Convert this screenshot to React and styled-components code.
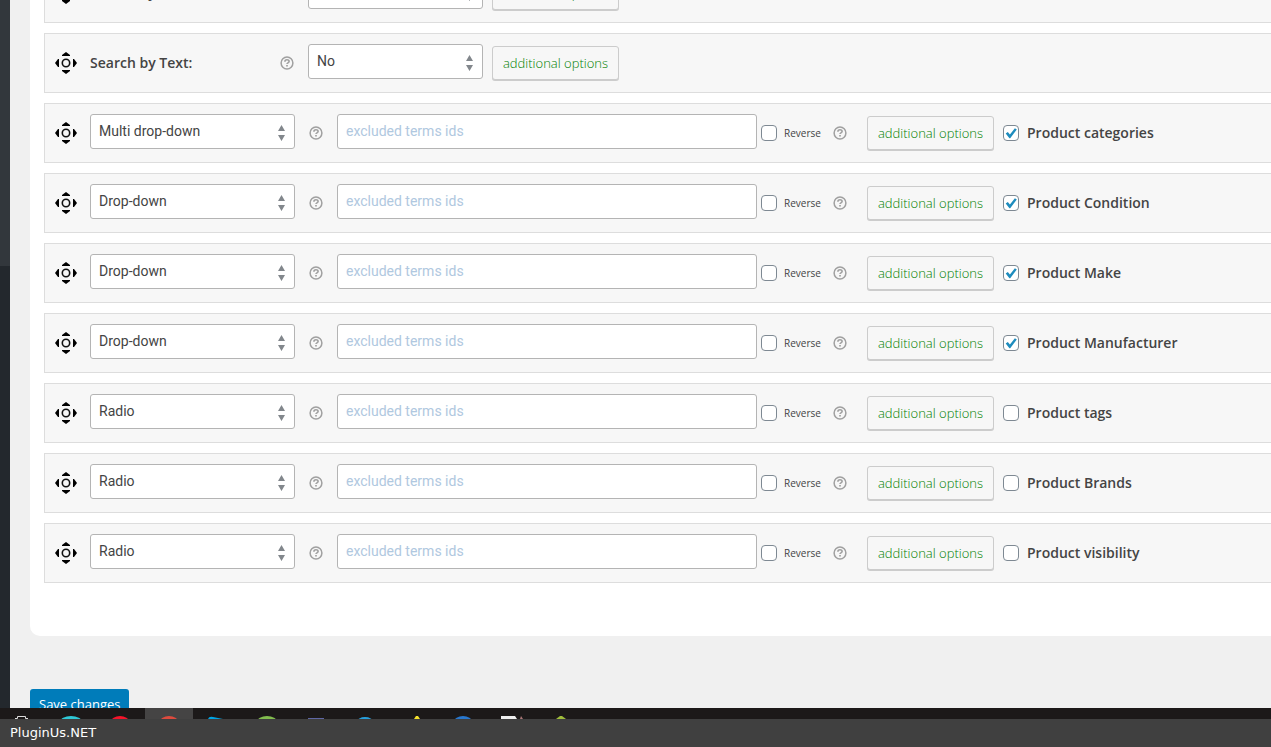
import React, { useState } from "react";
import styled, { createGlobalStyle, ThemeProvider } from "styled-components";

const theme = {
  colors: {
    page: "#f0f0f0",
    panel: "#ffffff",
    row: "#f7f7f7",
    rowBorder: "#dddddd",
    fieldBorder: "#b4b4b4",
    text: "#444444",
    placeholder: "#b0c8e0",
    option: "#008000",
    primary: "#007cba",
    check: "#1e8cbe"
  }
};

const GlobalStyle = createGlobalStyle`
  *,
  *::before,
  *::after {
    box-sizing: border-box;
  }

  body {
    margin: 0;
    color: #444444;
    font-family: "Open Sans", sans-serif;
    font-size: 14px;
  }
`;

const Screen = styled.div`
  height: 100vh;
  display: flex;
  flex-direction: column;
  overflow: hidden;
`;

const Admin = styled.div`
  flex: 1;
  min-height: 0;
  display: flex;
  overflow: hidden;
  background: ${props => props.theme.colors.page};
`;

const AdminMenu = styled.nav`
  flex: none;
  width: 10px;
  background: linear-gradient(#32373c 266px, #23282d 266px);
`;

const Content = styled.main`
  flex: 1;
  min-width: 0;
  padding-left: 20px;
  overflow: hidden;
`;

const Panel = styled.section`
  padding: 0 0 53px 14px;
  margin-bottom: 53px;
  background: ${props => props.theme.colors.panel};
  border-bottom-left-radius: 10px;
`;

/* the list is scrolled part of the way through its first row */
const FieldList = styled.ul`
  list-style: none;
  margin: -37px 0 0;
  padding: 0;
  display: flex;
  flex-direction: column;
  gap: 10px;
`;

const Row = styled.li`
  height: 60px;
  padding: 10px;
  display: flex;
  align-items: flex-start;
  background: ${props => props.theme.colors.row};
  border: 1px solid ${props => props.theme.colors.rowBorder};
  border-right: 0;

  > * {
    flex: none;
  }
`;

const Handle = styled.button`
  width: 24px;
  height: 38px;
  margin-right: 11px;
  padding: 0;
  display: flex;
  align-items: center;
  justify-content: flex-start;
  border: 0;
  background: none;
  cursor: move;
`;

const RowLabel = styled.label`
  width: 190px;
  line-height: 38px;
  font-weight: 600;
`;

const HelpButton = styled.button`
  width: 14px;
  height: 38px;
  margin-left: ${props => (props.$flush ? 0 : 14)}px;
  margin-right: ${props => (props.$wide ? 20 : 14)}px;
  padding: 0;
  display: flex;
  align-items: center;
  border: 0;
  background: none;
  cursor: help;
`;

const SelectWrap = styled.div`
  position: relative;
  width: ${props => (props.$small ? 175 : 205)}px;
  margin-right: ${props => (props.$small ? 9 : 0)}px;

  select {
    appearance: none;
    width: 100%;
    height: 35px;
    padding: 0 28px 2px 8px;
    border: 1px solid ${props => props.theme.colors.fieldBorder};
    border-radius: 3px;
    background: white;
    color: ${props => props.theme.colors.text};
    font-family: Roboto, sans-serif;
    font-size: 14px;
  }

  svg {
    position: absolute;
    right: 9px;
    top: 11px;
    pointer-events: none;
  }
`;

const TermsInput = styled.input`
  width: 420px;
  height: 35px;
  margin-right: 4px;
  padding: 0 8px 2px;
  border: 1px solid ${props => props.theme.colors.fieldBorder};
  border-radius: 3px;
  background: white;
  font-family: Roboto, sans-serif;
  font-size: 14px;

  &::placeholder {
    color: ${props => props.theme.colors.placeholder};
    opacity: 1;
  }
`;

const OptionsButton = styled.button`
  width: 127px;
  height: 34px;
  margin: 2px 9px 0 0;
  padding: 0;
  border: 1px solid #cccccc;
  border-radius: 3px;
  background: ${props => props.theme.colors.row};
  box-shadow: 0 1px 0 #cccccc;
  color: ${props => props.theme.colors.option};
  font-family: "Open Sans", sans-serif;
  font-size: 13px;
  font-weight: 300;
  cursor: pointer;
`;

const CheckLabel = styled.label`
  width: ${props => (props.$small ? "58px" : "auto")};
  height: 38px;
  display: flex;
  align-items: center;
  gap: ${props => (props.$small ? 7 : 8)}px;
  font-size: ${props => (props.$small ? 10 : 14)}px;
  font-weight: ${props => (props.$small ? 400 : 600)};
  line-height: 18px;
  white-space: nowrap;
`;

const CheckBox = styled.span`
  position: relative;
  display: flex;

  input {
    appearance: none;
    width: 16px;
    height: 16px;
    margin: 0;
    border: 1px solid #7e8993;
    border-radius: 4px;
    background: white;
  }

  svg {
    position: absolute;
    inset: 0;
    pointer-events: none;
  }
`;

const SaveButton = styled.button`
  height: 32px;
  padding: 0 9px 2px;
  border: 0;
  border-radius: 3px;
  background: ${props => props.theme.colors.primary};
  color: white;
  font-family: "Open Sans", sans-serif;
  font-size: 13px;
`;

const Taskbar = styled.div`
  flex: none;
  height: 11px;
  background: #1c1919;

  svg {
    display: block;
  }
`;

const Caption = styled.footer`
  flex: none;
  height: 28px;
  padding: 0 10px;
  background: #404040;
  color: white;
  font-family: "DejaVu Sans", sans-serif;
  font-size: 13px;
  line-height: 28px;
`;

const MoveIcon = () => (
  <svg width="22" height="22" viewBox="0 0 22 22">
    <path
      d="M11 0l4 3v1H7V3zM11 22l4-3v-1H7v1zM0 11l3-4h1v8H3zM22 11l-3-4h-1v8h1z"
      fill="#000"
    />
    <circle cx="11" cy="11" r="3.7" fill="none" stroke="#111" strokeWidth="1.6" />
  </svg>
);

const HelpIcon = () => (
  <svg width="14" height="14" viewBox="0 0 14 14" fill="none" stroke="#a0a0a0">
    <circle cx="7" cy="7" r="5.9" strokeWidth="1.5" />
    <path d="M4.9 5.7c0-2.5 4.200-2.500 4.200-.2 0 1.400-2.100 1.400-2.100 2.600" strokeWidth="1.6" />
    <path d="M7 9v1.600" strokeWidth="1.7" />
  </svg>
);

const Help = props => (
  <HelpButton type="button" aria-label="Help" {...props}>
    <HelpIcon />
  </HelpButton>
);

const Select = ({ small, options, value, ...rest }) => (
  <SelectWrap $small={small}>
    <select defaultValue={value} {...rest}>
      {options.map(option => (
        <option key={option}>{option}</option>
      ))}
    </select>
    <svg width="8" height="16" viewBox="0 0 8 16" fill="#82878c">
      <path d="M3.500 0L7 6H0zM3.500 16L7 10H0z" />
    </svg>
  </SelectWrap>
);

const Check = ({ small, label, initial }) => {
  const [checked, setChecked] = useState(Boolean(initial));
  return (
    <CheckLabel $small={small}>
      <CheckBox>
        <input
          type="checkbox"
          checked={checked}
          onChange={() => setChecked(!checked)}
        />
        {checked && (
          <svg width="16" height="16" viewBox="0 0 16 16">
            <path
              d="M2.700 8.400l2.100-1.500 2.100 2.500 5-6.100 1.900 1.100L7.200 13.200H6.400z"
              fill={theme.colors.check}
            />
          </svg>
        )}
      </CheckBox>
      {label}
    </CheckLabel>
  );
};

const DragHandle = () => (
  <Handle type="button" aria-label="Move">
    <MoveIcon />
  </Handle>
);

const TextRow = ({ id, label }) => (
  <Row>
    <DragHandle />
    <RowLabel htmlFor={id}>{label}</RowLabel>
    <Help $flush />
    <Select small id={id} options={["No", "Yes"]} value="No" />
    <OptionsButton type="button">additional options</OptionsButton>
  </Row>
);

const VIEWS = ["Radio", "Drop-down", "Multi drop-down", "Checkbox"];

const TaxonomyRow = ({ view, name, active }) => (
  <Row>
    <DragHandle />
    <Select options={VIEWS} value={view} aria-label={`${name} view`} />
    <Help />
    <TermsInput
      type="text"
      placeholder="excluded terms ids"
      aria-label={`${name} excluded terms ids`}
    />
    <Check small label="Reverse" />
    <Help $wide />
    <OptionsButton type="button">additional options</OptionsButton>
    <Check label={name} initial={active} />
  </Row>
);

const taxonomies = [
  { view: "Multi drop-down", name: "Product categories", active: true },
  { view: "Drop-down", name: "Product Condition", active: true },
  { view: "Drop-down", name: "Product Make", active: true },
  { view: "Drop-down", name: "Product Manufacturer", active: true },
  { view: "Radio", name: "Product tags" },
  { view: "Radio", name: "Product Brands" },
  { view: "Radio", name: "Product visibility" }
];

const TaskbarIcons = () => (
  <svg width="600" height="11" viewBox="0 0 600 11">
    <rect x="145" width="48" height="11" fill="#454444" />
    <path d="M15 10.500h2.500v-2h8v2H28" fill="none" stroke="#ddd" />
    <ellipse cx="71" cy="14" rx="11" ry="6" fill="#2fc8d6" />
    <ellipse cx="120" cy="14" rx="9" ry="6" fill="#f5142a" />
    <ellipse cx="169" cy="14" rx="9" ry="6" fill="#dd4b3e" />
    <path d="M208 11q1-3 5-2l10 2z" fill="#00a4e4" />
    <ellipse cx="267" cy="14" rx="10" ry="6" fill="#82bd4e" />
    <path d="M308 10h16v1h-16z" fill="#5f67a5" />
    <ellipse cx="365" cy="14" rx="8" ry="5" fill="#279fdc" />
    <path d="M414 11l2-3h2l2 3z" fill="#f4e02c" />
    <ellipse cx="463" cy="14" rx="9" ry="6" fill="#2877cd" />
    <path d="M501 8h14l2 3h-16z" fill="#eee" />
    <path d="M520 11l1-3 2 3z" fill="#a77" />
    <path d="M556 11l4-3h2l4 3z" fill="#9fbd3b" />
  </svg>
);

const App = () => (
  <ThemeProvider theme={theme}>
    <GlobalStyle />
    <Screen>
      <Admin>
        <AdminMenu aria-label="Admin menu" />
        <Content>
          <Panel>
            <FieldList>
              <TextRow id="search-by-sku" label="Search by SKU:" />
              <TextRow id="search-by-text" label="Search by Text:" />
              {taxonomies.map(item => (
                <TaxonomyRow key={item.name} {...item} />
              ))}
            </FieldList>
          </Panel>
          <SaveButton type="submit">Save changes</SaveButton>
        </Content>
      </Admin>
      <Taskbar>
        <TaskbarIcons />
      </Taskbar>
      <Caption>PluginUs.NET</Caption>
    </Screen>
  </ThemeProvider>
);

export default App;
